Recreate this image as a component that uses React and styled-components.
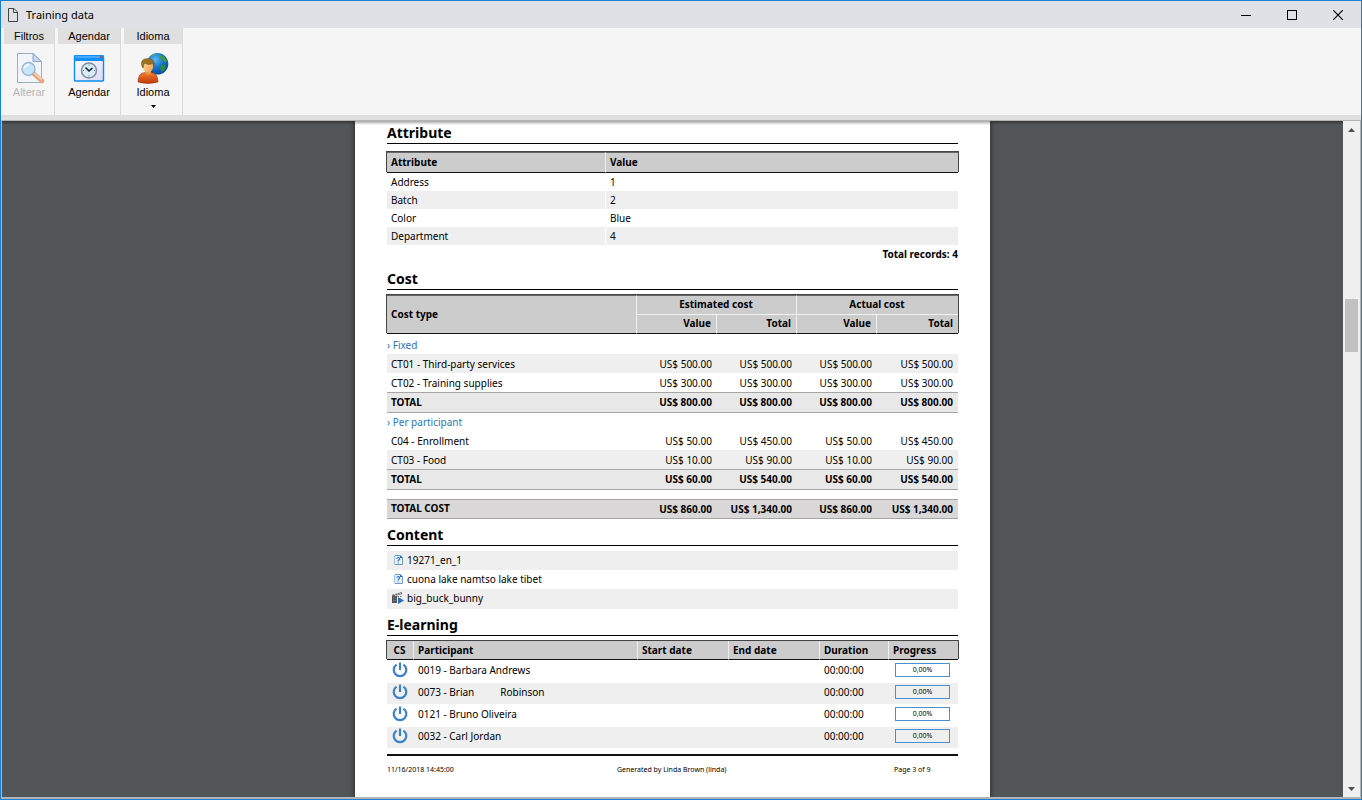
import React from 'react';
import styled, { createGlobalStyle } from 'styled-components';

const attributes = [
    ['Address', '1'],
    ['Batch', '2'],
    ['Color', 'Blue'],
    ['Department', '4'],
];

const costGroups = [
    {
        name: 'Fixed',
        rows: [
            { name: 'CT01 - Third-party services', striped: true, values: ['US$ 500.00', 'US$ 500.00', 'US$ 500.00', 'US$ 500.00'] },
            { name: 'CT02 - Training supplies', values: ['US$ 300.00', 'US$ 300.00', 'US$ 300.00', 'US$ 300.00'] },
        ],
        total: ['US$ 800.00', 'US$ 800.00', 'US$ 800.00', 'US$ 800.00'],
    },
    {
        name: 'Per participant',
        rows: [
            { name: 'C04 - Enrollment', values: ['US$ 50.00', 'US$ 450.00', 'US$ 50.00', 'US$ 450.00'] },
            { name: 'CT03 - Food', striped: true, values: ['US$ 10.00', 'US$ 90.00', 'US$ 10.00', 'US$ 90.00'] },
        ],
        total: ['US$ 60.00', 'US$ 540.00', 'US$ 60.00', 'US$ 540.00'],
    },
];

const totalCost = ['US$ 860.00', 'US$ 1,340.00', 'US$ 860.00', 'US$ 1,340.00'];

const participants = [
    '0019 - Barbara Andrews',
    '0073 - Brian          Robinson',
    '0121 - Bruno Oliveira',
    '0032 - Carl Jordan',
];

const FileIcon = () => (
    <svg width="12" height="16" viewBox="0 0 12 16" fill="none" stroke="#444" aria-hidden="true">
        <path d="M1.5 1.5H7L10.5 5V14.5H1.5Z" />
        <path d="M6.5 1.5V5.5H10.5" />
    </svg>
);

const SearchPageIcon = () => (
    <svg width="32" height="32" viewBox="0 0 32 32" aria-hidden="true">
        <path d="M4.5 1.5H20L28.5 9.5V30.5H4.5Z" fill="#f1f5fb" stroke="#9fadc0" />
        <path d="M20 1.5V9.5H28.5Z" fill="#c9d8ec" stroke="#8fa6c6" />
        <path d="M20.5 21.5L29 29" stroke="#e6a780" strokeWidth="4.5" strokeLinecap="round" />
        <path d="M21 20.8L28.5 27.4" stroke="#f6d5b8" strokeWidth="1.5" />
        <circle cx="15.5" cy="17" r="6.5" fill="#c5e8f8" stroke="#9fb6cc" strokeWidth="1.4" />
        <path d="M11.5 16Q12.5 12.5 16 12.5" fill="none" stroke="#fff" strokeWidth="1.6" />
    </svg>
);

const ScheduleIcon = () => (
    <svg width="32" height="32" viewBox="0 0 32 32" aria-hidden="true">
        <defs>
            <linearGradient id="sheet" x1="0" y1="0" x2="1" y2="1">
                <stop offset="0" stopColor="#fff" />
                <stop offset="1" stopColor="#dcd9f4" />
            </linearGradient>
        </defs>
        <rect x="1.5" y="4" width="29" height="25" rx="1" fill="url(#sheet)" stroke="#0b8cf5" strokeWidth="1.4" />
        <rect x="1" y="3" width="30" height="6" rx="1" fill="#1390f7" />
        <path d="M2.5 5H27" stroke="#7cc4fb" />
        <rect x="27" y="4" width="2" height="2" fill="#b0503f" />
        <circle cx="16" cy="18.5" r="7.5" fill="#d5ecfa" stroke="#7f8da0" strokeWidth="1.5" />
        <path d="M12.5 15.5L16 19L19.5 16" fill="none" stroke="#16202c" strokeWidth="1.6" />
        <path d="M16 12.5V13.5M16 23.5V24.5M10 18.5H11M21 18.5H22" stroke="#54708c" />
    </svg>
);

const LanguageIcon = () => (
    <svg width="32" height="32" viewBox="0 0 32 32" aria-hidden="true">
        <defs>
            <radialGradient id="globe" cx="0.4" cy="0.3" r="0.8">
                <stop offset="0" stopColor="#5cb8f5" />
                <stop offset="0.5" stopColor="#1272cc" />
                <stop offset="1" stopColor="#063f8c" />
            </radialGradient>
            <linearGradient id="shirt" x1="0" y1="0" x2="0" y2="1">
                <stop offset="0" stopColor="#f47b30" />
                <stop offset="1" stopColor="#c03a08" />
            </linearGradient>
            <linearGradient id="face" x1="0" y1="0" x2="1" y2="1">
                <stop offset="0" stopColor="#ffe0a8" />
                <stop offset="1" stopColor="#ef9a48" />
            </linearGradient>
        </defs>
        <circle cx="20.5" cy="11.8" r="10.8" fill="url(#globe)" />
        <path d="M23 3L27 4.5L30 9L28.500 11L26 8.500L23.500 7.500Z" fill="#3f9a3f" />
        <path d="M25.500 12L29 14L27.500 18L24.500 20L23 16Z" fill="#2e8b3d" />
        <path d="M14 3.500L18 2L16.500 5Z" fill="#4fae4c" />
        <path d="M1 30Q1 21 8 20.500H14Q21 21 21 30Q11 33 1 30Z" fill="url(#shirt)" stroke="#a53205" strokeWidth="0.6" />
        <path d="M8 18H14V21L11 23.500L8 21Z" fill="#e89445" />
        <ellipse cx="11" cy="14" rx="5.200" ry="6.600" fill="url(#face)" />
        <path d="M5 14.500Q2.500 7 10.500 6.500Q18 6.500 17 14.500L16 11.500Q10.500 13.500 8 11Q6.500 12 6 16Z" fill="#9a7220" stroke="#6b4a0c" strokeWidth="0.5" />
    </svg>
);

const CaretDown = () => (
    <svg width="5" height="3" viewBox="0 0 5 3" aria-hidden="true">
        <path d="M0 0H5L2.500 3Z" fill="#000" />
    </svg>
);

const QuestionDocIcon = () => (
    <svg width="12" height="12" viewBox="0 0 12 12" fill="none" aria-hidden="true">
        <path d="M3 1.500H8L10.500 4V10.500H3" fill="#eaf3fb" stroke="#6f9cc7" />
        <path d="M2.500 2V10.500" stroke="#a9c6e2" strokeWidth="1.400" />
        <path d="M8 1V4H11Z" fill="#2a6fb5" />
        <path d="M4.800 4.800Q4.800 3.500 6.300 3.500Q7.800 3.600 7.600 5Q7.400 5.800 6.200 6.500V7.500M6.200 8.400V9.500" stroke="#2f78bd" strokeWidth="1.100" />
    </svg>
);

const VideoIcon = () => (
    <svg width="12" height="12" viewBox="0 0 12 12" aria-hidden="true">
        <path d="M0 4H5V11H0Z" fill="#555" />
        <path d="M0 2.800L9.500 0L10.200 2L0.500 4.500Z" fill="#666" />
        <path d="M2.500 2L3.500 3.500M5 1.300L6 2.800M7.500 0.600L8.500 2.100" stroke="#fff" strokeWidth="0.900" />
        <path d="M5.500 4.500H9.500" stroke="#777" strokeDasharray="1.500 1" />
        <path d="M6 5L12 8.500L6 12Z" fill="#2a6db5" />
        <path d="M1 6H4M1 8.500H4" stroke="#888" strokeWidth="0.600" />
    </svg>
);

const PowerIcon = () => (
    <svg width="16" height="16" viewBox="0 0 16 16" fill="none" stroke="#3c82c8" strokeWidth="2.200" role="img" aria-label="Not started">
        <path d="M4.600 2.600A6.300 6.300 0 1 0 11.400 2.600" />
        <path d="M8 0.500V8" />
    </svg>
);

const Ribbon = () => (
    <Toolbar>
        <Group $width={51}>
            <GroupTitle>Filtros</GroupTitle>
            <Tool disabled>
                <SearchPageIcon />
                Alterar
            </Tool>
        </Group>
        <Group $width={63}>
            <GroupTitle>Agendar</GroupTitle>
            <Tool>
                <ScheduleIcon />
                Agendar
            </Tool>
        </Group>
        <Group $width={59}>
            <GroupTitle>Idioma</GroupTitle>
            <Tool>
                <LanguageIcon />
                Idioma
                <CaretDown />
            </Tool>
        </Group>
    </Toolbar>
);

const AttributeSection = () => (
    <Section>
        <Heading>Attribute</Heading>
        <Table $gap={8}>
            <colgroup>
                <col width="219" />
                <col />
            </colgroup>
            <Head $double>
                <tr>
                    <Th $height={21}>Attribute</Th>
                    <Th>Value</Th>
                </tr>
            </Head>
            <tbody>
                {attributes.map(([name, value], i) => (
                    <Row key={name} $striped={i % 2 === 1}>
                        <Td $height={18} $divided>{name}</Td>
                        <Td>{value}</Td>
                    </Row>
                ))}
            </tbody>
        </Table>
        <Records>Total records: 4</Records>
    </Section>
);

const Amounts = ({ values }) => values.map((value, i) => <Amount key={i}>{value}</Amount>);

const CostSection = () => (
    <Section>
        <Heading>Cost</Heading>
        <Table $gap={5}>
            <colgroup>
                <col />
                <col width="80" />
                <col width="80" />
                <col width="80" />
                <col width="81" />
            </colgroup>
            <Head $double>
                <tr>
                    <Th rowSpan="2">Cost type</Th>
                    <GroupTh colSpan="2">Estimated cost</GroupTh>
                    <GroupTh colSpan="2">Actual cost</GroupTh>
                </tr>
                <tr>
                    <Th $height={19} $right>Value</Th>
                    <Th $right>Total</Th>
                    <Th $right>Value</Th>
                    <Th $right>Total</Th>
                </tr>
            </Head>
            {costGroups.map((group, i) => (
                <tbody key={group.name}>
                    <tr>
                        <CostGroup colSpan="5" $first={i === 0}>› {group.name}</CostGroup>
                    </tr>
                    {group.rows.map(row => (
                        <Row key={row.name} $striped={row.striped}>
                            <Td $height={19}>{row.name}</Td>
                            <Amounts values={row.values} />
                        </Row>
                    ))}
                    <TotalRow>
                        <Td $height={21}>TOTAL</Td>
                        <Amounts values={group.total} />
                    </TotalRow>
                </tbody>
            ))}
            <tfoot>
                <tr>
                    <Spacer colSpan="5" />
                </tr>
                <TotalRow $grand>
                    <Td $height={20}>TOTAL COST</Td>
                    <Amounts values={totalCost} />
                </TotalRow>
            </tfoot>
        </Table>
    </Section>
);

const ContentSection = () => (
    <Section>
        <Heading>Content</Heading>
        <FileList>
            <FileItem><QuestionDocIcon />19271_en_1</FileItem>
            <FileItem><QuestionDocIcon />cuona lake namtso lake tibet</FileItem>
            <FileItem><VideoIcon />big_buck_bunny</FileItem>
        </FileList>
    </Section>
);

const ElearningSection = () => (
    <Section>
        <Heading>E-learning</Heading>
        <Table $gap={5}>
            <colgroup>
                <col width="27" />
                <col />
                <col width="91" />
                <col width="91" />
                <col width="69" />
                <col width="69" />
            </colgroup>
            <Head>
                <tr>
                    <Th $height={19} $center>CS</Th>
                    <Th>Participant</Th>
                    <Th>Start date</Th>
                    <Th>End date</Th>
                    <Th>Duration</Th>
                    <Th>Progress</Th>
                </tr>
            </Head>
            <tbody>
                {participants.map((name, i) => (
                    <Row key={name} $striped={i % 2 === 1}>
                        <PersonTd $center><PowerIcon /></PersonTd>
                        <PersonTd>{name}</PersonTd>
                        <PersonTd />
                        <PersonTd />
                        <PersonTd>00:00:00</PersonTd>
                        <PersonTd $center><Progress>0,00%</Progress></PersonTd>
                    </Row>
                ))}
            </tbody>
        </Table>
    </Section>
);

const App = () => (
    <>
        <GlobalStyle />
        <Window>
            <TitleBar>
                <FileIcon />
                <Title>Training data</Title>
                <WindowButton aria-label="Minimize">
                    <svg width="10" height="10"><path d="M0 5.500H10" stroke="#000" /></svg>
                </WindowButton>
                <WindowButton aria-label="Maximize">
                    <svg width="10" height="10"><rect x="0.500" y="0.500" width="9" height="9" fill="none" stroke="#000" /></svg>
                </WindowButton>
                <WindowButton aria-label="Close">
                    <svg width="10" height="10"><path d="M0 0L10 10M10 0L0 10" stroke="#000" strokeWidth="1.200" /></svg>
                </WindowButton>
            </TitleBar>
            <Ribbon />
            <Viewer>
                <Canvas>
                    <Page>
                        <AttributeSection />
                        <CostSection />
                        <ContentSection />
                        <ElearningSection />
                        <Footer>
                            <span>11/16/2018 14:45:00</span>
                            <span>Generated by Linda Brown (linda)</span>
                            <span>Page 3 of 9</span>
                        </Footer>
                    </Page>
                </Canvas>
                <ScrollBar>
                    <ScrollButton aria-label="Scroll up">
                        <svg width="7" height="4"><path d="M0 4H7L3.500 0Z" fill="#505050" /></svg>
                    </ScrollButton>
                    <Track><Thumb /></Track>
                    <ScrollButton aria-label="Scroll down">
                        <svg width="7" height="4"><path d="M0 0H7L3.500 4Z" fill="#505050" /></svg>
                    </ScrollButton>
                </ScrollBar>
            </Viewer>
        </Window>
    </>
);

export default App;

const GlobalStyle = createGlobalStyle`
    * {
        box-sizing: border-box;
    }

    body {
        margin: 0;
        font-family: "Noto Sans", "Open Sans", sans-serif;
        color: #000;
    }

    button {
        border: 0;
        padding: 0;
        background: none;
        font: inherit;
        color: inherit;
    }

    svg {
        display: block;
        flex: none;
    }
`;

const Window = styled.div`
    height: 100vh;
    display: flex;
    flex-direction: column;
    border: 1px solid #1c80d2;
    background: #f5f5f5;
    overflow: hidden;
`;

const TitleBar = styled.header`
    height: 27px;
    flex: none;
    display: flex;
    align-items: center;
    padding-left: 6px;
    background: #dee1e6;
`;

const Title = styled.h1`
    flex: 1;
    margin: 0 0 0 7px;
    font-size: 11px;
    font-weight: 400;
`;

const WindowButton = styled.button`
    width: 46px;
    height: 27px;
    display: flex;
    align-items: center;
    justify-content: center;
`;

const Toolbar = styled.div`
    height: 92px;
    flex: none;
    display: flex;
    gap: 3px;
    padding-left: 3px;
    border-bottom: 5px solid #dfdfdf;
    background: #f5f5f5;
    font-family: "Liberation Sans", Arial, sans-serif;
    font-size: 11px;
`;

const Group = styled.div`
    width: ${props => props.$width}px;
    border-right: 1px solid #dadada;
`;

const GroupTitle = styled.div`
    height: 16px;
    line-height: 16px;
    text-align: center;
    background: #dfdfdf;
`;

const Tool = styled.button`
    width: 100%;
    display: flex;
    flex-direction: column;
    align-items: center;
    padding-top: 8px;
    line-height: 16px;

    &:disabled {
        color: #b5b5b5;
    }

    svg + svg {
        margin-top: 5px;
    }
`;

const Viewer = styled.main`
    flex: 1;
    min-height: 0;
    display: flex;
    border: 1px solid #b4b4b4;
    border-width: 1px 1px 2px;
`;

const Canvas = styled.div`
    position: relative;
    flex: 1;
    display: flex;
    justify-content: center;
    background: #525659;
    overflow: hidden;

    &::after {
        content: '';
        position: absolute;
        inset: 0 0 auto;
        height: 4px;
        background: linear-gradient(rgba(0, 0, 0, .35), rgba(0, 0, 0, 0));
    }
`;

const Page = styled.article`
    width: 635px;
    padding: 0 32px;
    background: #fff;
    box-shadow: 0 0 5px 1px rgba(0, 0, 0, .45);
    font-size: 10px;
    line-height: 14px;
`;

const Section = styled.section`
    margin-bottom: 4px;
`;

const Heading = styled.h2`
    margin: 0;
    padding-top: 2px;
    border-bottom: 1px solid #000;
    font-size: 14px;
    line-height: 20px;
    font-weight: 700;
`;

const Table = styled.table`
    width: 100%;
    margin-top: ${props => props.$gap}px;
    table-layout: fixed;
    border-collapse: separate;
    border-spacing: 0;
`;

const Th = styled.th`
    height: ${props => props.$height ? `${props.$height}px` : 'auto'};
    padding: 0 5px 0 4px;
    border-right: 1px solid #f0f0f0;
    border-bottom: 1px solid #111;
    background: #ccc;
    font-weight: 700;
    text-align: ${props => (props.$right && 'right') || (props.$center && 'center') || 'left'};

    &:last-child {
        border-right: 0;
    }
`;

const GroupTh = styled(Th)`
    height: 20px;
    border-bottom-color: #f0f0f0;
    text-align: center;
`;

const Head = styled.thead`
    box-shadow: -1px -1px 0 #444, 1px -1px 0 #444;

    th {
        padding-bottom: ${props => props.$double ? 2 : 0}px;
    }

    tr:first-child th {
        border-top: ${props => props.$double ? '1px solid #666' : 0};
    }
`;

const Row = styled.tr`
    background: ${props => props.$striped ? '#efefef' : '#fff'};
`;

const Td = styled.td`
    height: ${props => props.$height ? `${props.$height}px` : 'auto'};
    padding: 0 4px;
    border-right: ${props => props.$divided ? '1px solid #fff' : 0};
`;

const Amount = styled.td`
    padding: 1px 5px 0 0;
    text-align: right;
    white-space: nowrap;
`;

const CostGroup = styled.td`
    height: ${props => props.$first ? 20 : 18}px;
    padding: ${props => props.$first ? 2 : 0}px 0 0;
    color: #2e75b6;
`;

const TotalRow = styled.tr`
    background: ${props => props.$grand ? '#d9d7d7' : '#e8e8e8'};
    font-weight: 700;

    td {
        padding-bottom: 2px;
        border-top: 1px solid #a6a6a6;
        border-bottom: 1px solid #a6a6a6;
    }
`;

const Spacer = styled.td`
    height: 9px;
    padding: 0;
`;

const Records = styled.div`
    line-height: 18px;
    font-weight: 700;
    text-align: right;
`;

const FileList = styled.ul`
    margin: 5px 0 0;
    padding: 0;
    list-style: none;
`;

const FileItem = styled.li`
    display: flex;
    align-items: center;
    gap: 3px;
    height: 19px;
    padding: 0 0 2px 5px;

    &:nth-child(odd) {
        background: #efefef;
    }

    &:last-child {
        height: 20px;
    }
`;

const PersonTd = styled.td`
    height: 22px;
    padding: ${props => props.$center ? '0 6px 3px' : '0 4px 3px'};
    border-top: 1px solid #fff;
    white-space: pre;

    svg {
        margin: 0 -1px;
    }
`;

const Progress = styled.div`
    width: 55px;
    height: 14px;
    border: 1px solid #4a8fcf;
    font-size: 7px;
    line-height: 12px;
    text-align: center;
`;

const Footer = styled.footer`
    display: grid;
    grid-template-columns: 230px 1fr 64px;
    margin-top: 6px;
    padding-top: 8px;
    border-top: 2px solid #111;
    font-size: 7px;
    line-height: 12px;
`;

const ScrollBar = styled.div`
    width: 17px;
    flex: none;
    display: flex;
    flex-direction: column;
    background: #f0f0f0;
`;

const ScrollButton = styled.button`
    height: 17px;
    display: flex;
    align-items: center;
    justify-content: center;
`;

const Track = styled.div`
    flex: 1;
    display: grid;
    grid-template-rows: 161fr 53px 428fr;
    padding: 0 2px;
`;

const Thumb = styled.div`
    grid-row: 2;
    background: #c1c1c1;
`;
